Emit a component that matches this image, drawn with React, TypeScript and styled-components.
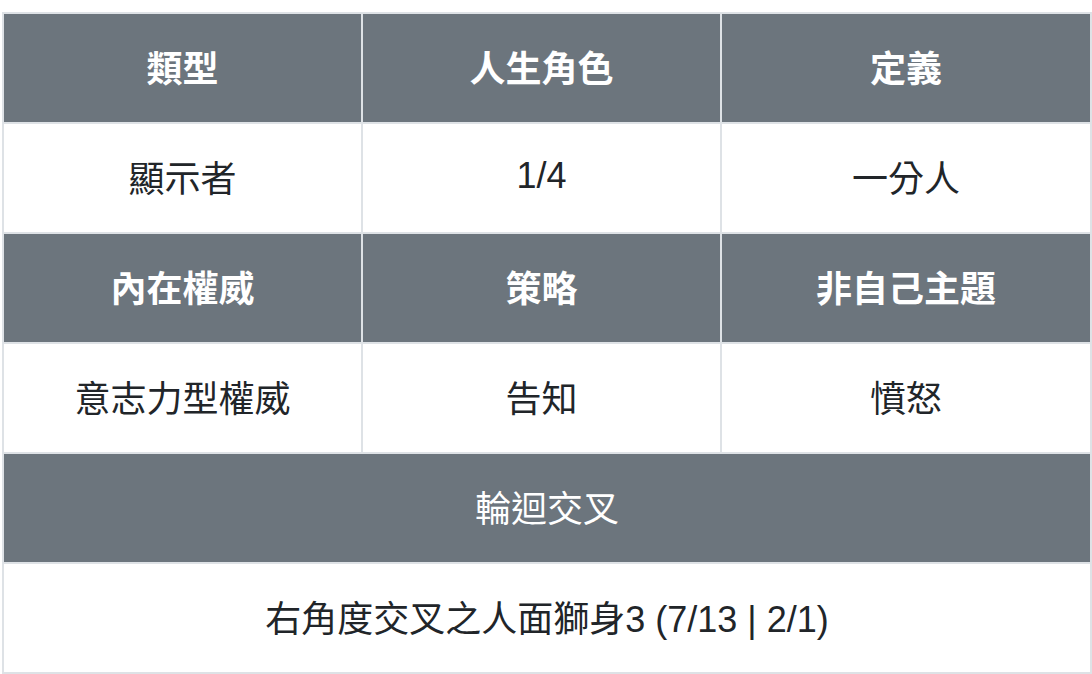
import React from "react";
import styled, { createGlobalStyle } from "styled-components";

const GlobalStyle = createGlobalStyle`
  html, body {
    margin: 0;
    padding: 0;
    background: #ffffff;
  }
  body {
    font-family: "Liberation Sans", "Noto Sans CJK TC", sans-serif;
    color: #212529;
  }
`;

const Page = styled.div`
  padding: 12px 2px 0 2px;
`;

const Table = styled.table`
  width: 1088px;
  border-collapse: collapse;
  table-layout: fixed;
  border: 2px solid #dee2e6;
`;

const Col = styled.col<{ $w: number }>`
  width: ${(p) => p.$w}px;
`;

const Cell = styled.td<{ $head?: boolean; $light?: boolean }>`
  height: 110px;
  padding: 0 0 5px 0;
  box-sizing: border-box;
  border: 2px solid #dee2e6;
  text-align: center;
  vertical-align: middle;
  font-size: 36px;
  font-family: "Liberation Sans", "Noto Sans CJK TC", sans-serif;
  font-weight: ${(p) => (p.$head && !p.$light ? 700 : 400)};
  color: ${(p) => (p.$head ? "#ffffff" : "#212529")};
  background: ${(p) => (p.$head ? "#6c757d" : "#ffffff")};
`;

const rows: { head: boolean; cells: string[] }[] = [
  { head: true, cells: ["類型", "人生角色", "定義"] },
  { head: false, cells: ["顯示者", "1/4", "一分人"] },
  { head: true, cells: ["內在權威", "策略", "非自己主題"] },
  { head: false, cells: ["意志力型權威", "告知", "憤怒"] },
];

export default function App() {
  return (
    <Page>
      <GlobalStyle />
      <Table>
        <colgroup>
          <Col $w={359} />
          <Col $w={359} />
          <Col $w={370} />
        </colgroup>
        <tbody>
          {rows.map((r, i) => (
            <tr key={i}>
              {r.cells.map((c) => (
                <Cell key={c} $head={r.head} as={r.head ? "th" : "td"}>
                  {c}
                </Cell>
              ))}
            </tr>
          ))}
          <tr>
            <Cell colSpan={3} as="th" $head $light>
              輪迴交叉
            </Cell>
          </tr>
          <tr>
            <Cell colSpan={3}>右角度交叉之人面獅身3 (7/13 | 2/1)</Cell>
          </tr>
        </tbody>
      </Table>
    </Page>
  );
}
